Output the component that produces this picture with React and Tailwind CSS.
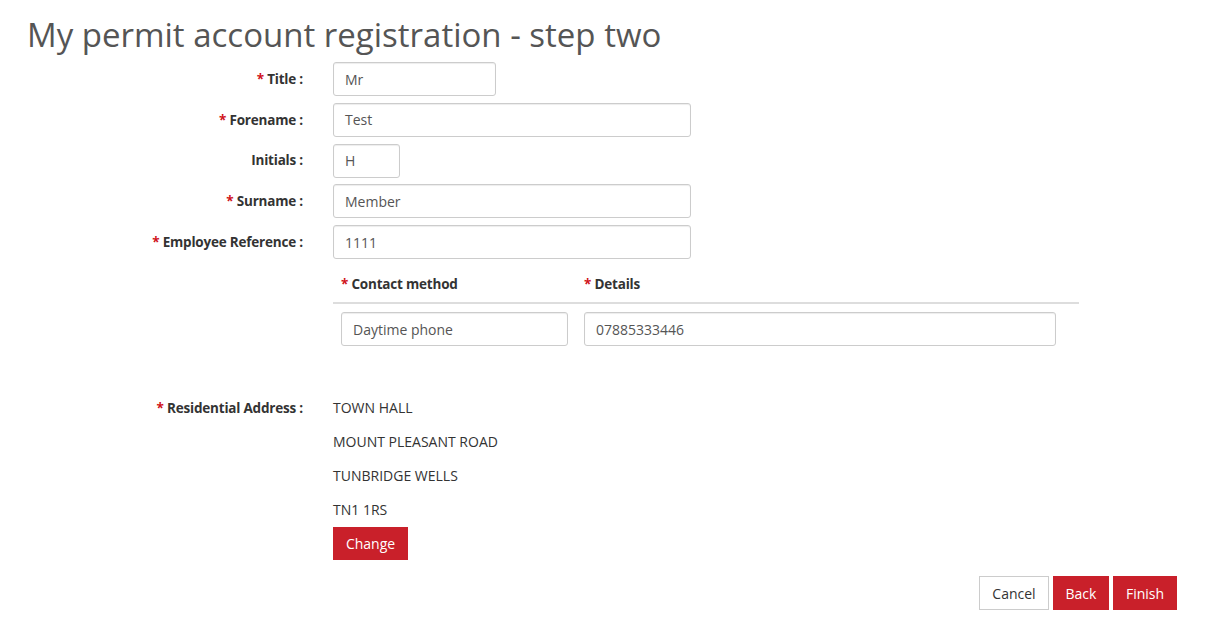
export default function App() {
  const red = "text-[#d0121b]";
  const Label = ({ req, children }) => (
    <div className="w-[303px] shrink-0 text-right text-[13.5px] font-bold text-[#333] tracking-[-0.2px]">
      {req && <span className={red}>* </span>}
      {children} :
    </div>
  );
  const inputCls =
    "h-[34px] rounded-[3px] border border-[#ccc] bg-white pl-[11px] pr-3 text-[14px] text-[#555] flex items-center shadow-[inset_0_1px_1px_rgba(0,0,0,0.075)]";
  const Row = ({ label, req, value, w }) => (
    <div className="flex items-center h-[34px]">
      <Label req={req}>{label}</Label>
      <div className="pl-[30px]">
        <div className={inputCls} style={{ width: w }}>{value}</div>
      </div>
    </div>
  );
  return (
    <div className="w-[1216px] h-[623px] bg-white font-['Open_Sans',sans-serif] text-[#333] overflow-hidden">
      <h1 className="pl-[27px] pt-[14px] text-[33px] leading-[42px] text-[#555]">
        My permit account registration - step two
      </h1>
      <div className="mt-[6px] flex flex-col gap-[6.75px]">
        <Row label="Title" req value="Mr" w="163px" />
        <Row label="Forename" req value="Test" w="358px" />
        <Row label="Initials" value="H" w="67px" />
        <Row label="Surname" req value="Member" w="358px" />
        <Row label="Employee Reference" req value="1111" w="358px" />
      </div>
      <div className="ml-[333px] mt-[9px] w-[746px]">
        <div className="flex h-[36px] pb-[2px] items-center border-b-2 border-[#ddd] text-[13.5px] font-bold tracking-[-0.2px]">
          <div className="w-[251px] pl-[8px]"><span className={red}>* </span>Contact method</div>
          <div><span className={red}>* </span>Details</div>
        </div>
        <div className="flex pt-[8px] pl-[8px] gap-[16px]">
          <div className={inputCls + " w-[227px]"}>Daytime phone</div>
          <div className={inputCls + " w-[472px]"}>07885333446</div>
        </div>
      </div>
      <div className="mt-[52px] flex">
        <Label req>Residential Address</Label>
        <div className="pl-[30px] text-[14px] text-[#333]">
          <div className="flex flex-col gap-[14px] leading-[20px]">
            <div>TOWN HALL</div>
            <div>MOUNT PLEASANT ROAD</div>
            <div>TUNBRIDGE WELLS</div>
            <div>TN1 1RS</div>
          </div>
          <button className="mt-[7px] h-[33px] w-[75px] bg-[#c9202a] text-white text-[14px]">Change</button>
        </div>
      </div>
      <div className="mt-[16px] flex justify-end gap-[4px] pr-[39px]">
        <button className="h-[34px] w-[70px] border border-[#ccc] bg-white text-[14px] text-[#333]">Cancel</button>
        <button className="h-[34px] w-[56px] bg-[#c9202a] text-white text-[14px]">Back</button>
        <button className="h-[34px] w-[64px] bg-[#c9202a] text-white text-[14px]">Finish</button>
      </div>
    </div>
  );
}
